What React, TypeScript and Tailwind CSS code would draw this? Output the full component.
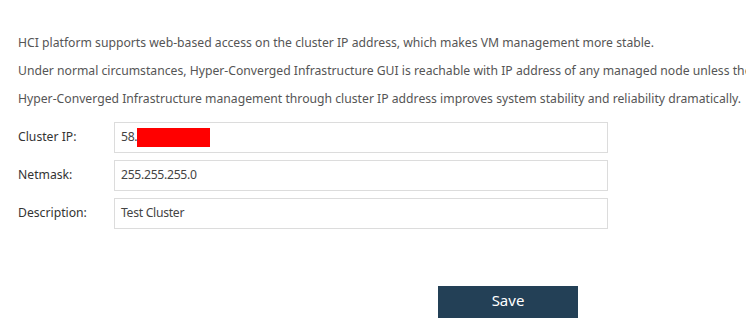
import React from "react";

const fields = [
  { label: "Cluster IP:", value: "58.", redacted: true },
  { label: "Netmask:", value: "255.255.255.0" },
  { label: "Description:", value: "Test Cluster" },
];

export default function App() {
  return (
    <div className="w-[746px] h-[329px] overflow-hidden bg-white font-['Noto_Sans',sans-serif] text-[12.2px]">
      <div className="pl-[18px] pt-[33px] text-[#555] whitespace-nowrap">
        <p className="h-[28px] leading-[20px]">HCI platform supports web-based access on the cluster IP address, which makes VM management more stable.</p>
        <p className="h-[28px] leading-[20px]">Under normal circumstances, Hyper-Converged Infrastructure GUI is reachable with IP address of any managed node unless the node is down.</p>
        <p className="h-[28px] leading-[20px]">Hyper-Converged Infrastructure management through cluster IP address improves system stability and reliability dramatically.</p>
      </div>
      <div className="pl-[18px] pt-[5px] flex flex-col gap-[7px]">
        {fields.map((f) => (
          <div key={f.label} className="flex items-center">
            <label className="w-[96px] text-[#333]">{f.label}</label>
            <div className="w-[494px] h-[31px] border border-[#dcdcdc] flex items-center pl-[6px] text-[#444]">
              <span className="tracking-[-0.3px]">{f.value}</span>
              {f.redacted && <span className="w-[73px] h-[19px] bg-[#ff0000]" />}
            </div>
          </div>
        ))}
      </div>
      <div className="pt-[57px] pl-[438px]">
        <button className="w-[140px] h-[32px] bg-[#234056] text-white text-[15px] leading-[28px] pb-[4px]">Save</button>
      </div>
    </div>
  );
}
